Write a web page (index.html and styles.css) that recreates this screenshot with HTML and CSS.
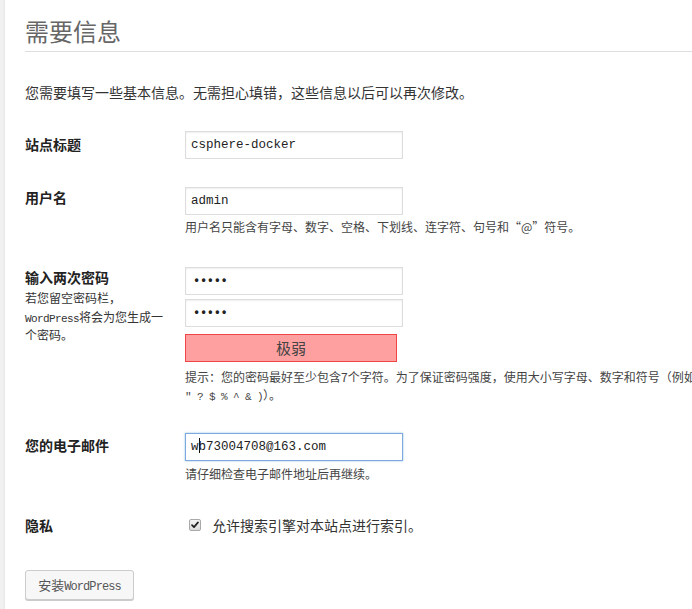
FILE: index.html
```html
<!DOCTYPE html>
<html lang="zh-CN">
<head>
<meta charset="utf-8">
<title>WordPress › 安装</title>
<link rel="stylesheet" href="styles.css">
</head>
<body>
<div class="wrap">
  <h1 class="title">需要信息</h1>
  <p class="intro">您需要填写一些基本信息。无需担心填错，这些信息以后可以再次修改。</p>

  <div class="form">
    <div class="row row-site">
      <div class="label lbl-site">站点标题</div>
      <div class="field"><div class="input">csphere-docker</div></div>
    </div>

    <div class="row row-user">
      <div class="label">用户名</div>
      <div class="field">
        <div class="input">admin</div>
        <p class="desc desc-user">用户名只能含有字母、数字、空格、下划线、连字符、句号和“@”符号。</p>
      </div>
    </div>

    <div class="row row-pass">
      <div class="label">
        <div class="lbl-main">输入两次密码</div>
        <div class="lbl-sub">若您留空密码栏，<br><span class="latin">WordPress</span>将会为您生成一<br>个密码。</div>
      </div>
      <div class="field">
        <div class="input dots">•••••</div>
        <div class="input dots second">•••••</div>
        <div class="meter">极弱</div>
        <p class="desc desc-hint">提示：您的密码最好至少包含7个字符。为了保证密码强度，使用大小写字母、数字和符号（例如! <br><span class="latin">" ? $ % ^ &amp; )</span>）。</p>
      </div>
    </div>

    <div class="row row-mail">
      <div class="label lbl-mail">您的电子邮件</div>
      <div class="field">
        <div class="input focus">w<span class="caret"></span>b73004708@163.com</div>
        <p class="desc desc-mail">请仔细检查电子邮件地址后再继续。</p>
      </div>
    </div>

    <div class="row row-privacy">
      <div class="label lbl-privacy">隐私</div>
      <div class="field check-field">
        <span class="checkbox"><svg viewBox="0 0 11 11" width="11" height="11"><path d="M2.2 5.6 L4.4 7.8 L8.8 2.6" fill="none" stroke="#222" stroke-width="1.9" stroke-linecap="round" stroke-linejoin="round"/></svg></span>
        <span class="check-text">允许搜索引擎对本站点进行索引。</span>
      </div>
    </div>
  </div>

  <div class="submit"><span class="button">安装<span class="latin btn-latin">WordPress</span></span></div>
</div>
</body>
</html>
```

FILE: styles.css
```css
html, body {
  margin: 0;
  padding: 0;
  overflow: hidden;
}

body {
  background: #f1f1f1;
  font-family: "Noto Sans CJK SC", "Noto Sans", sans-serif;
  color: #333;
  font-size: 14px;
  height: 609px;
}

.wrap {
  margin-left: 5px;
  background: #fff;
  padding: 16px 0 0 20px;
  height: 609px;
  box-sizing: border-box;
  box-shadow: -1px 0 2px rgba(0, 0, 0, 0.05);
}

.title {
  margin: 0;
  font-size: 24px;
  line-height: 30px;
  font-weight: 400;
  color: #666;
  padding-bottom: 5px;
  border-bottom: 1px solid #dedede;
}

.intro {
  margin: 30px 0 0;
  font-size: 14px;
  line-height: 20px;
  color: #333;
}

.row {
  display: grid;
  grid-template-columns: 160px 1fr;
}

.row-site { margin-top: 29px; }
.row-user { margin-top: 28px; }
.row-pass { margin-top: 31px; }
.row-mail { margin-top: 29px; }
.row-privacy { margin-top: 32px; }

.label {
  font-weight: 700;
  font-size: 14px;
  line-height: 20px;
  color: #222;
}

.lbl-site { padding-top: 3px; }
.lbl-mail { padding-top: 2px; }

.lbl-sub {
  margin-top: 2px;
  font-weight: 400;
  font-size: 12px;
  line-height: 18.5px;
  color: #333;
}

.latin {
  font-family: "Liberation Mono", "DejaVu Sans Mono", monospace;
  font-size: 11px;
  line-height: 1;
  letter-spacing: -0.6px;
}

.btn-latin {
  font-size: 12px;
  letter-spacing: -0.9px;
}

.field {
  min-width: 0;
}

.input {
  box-sizing: border-box;
  width: 218px;
  height: 28px;
  border: 1px solid #ddd;
  box-shadow: inset 0 1px 2px rgba(0, 0, 0, 0.07);
  padding: 0 5px;
  font-family: "Liberation Mono", "DejaVu Sans Mono", monospace;
  font-size: 12.5px;
  line-height: 26px;
  color: #222;
  background: #fff;
  white-space: nowrap;
}

.input.dots {
  font-weight: 700;
  font-size: 12px;
  letter-spacing: -0.3px;
  padding-left: 7px;
}

.input.second { margin-top: 4px; }

.input.focus {
  border-color: #7fa8e0;
  box-shadow: 0 0 2px rgba(30, 140, 190, 0.5);
}

.caret {
  display: inline-block;
  width: 1px;
  height: 15px;
  background: #111;
  vertical-align: -3px;
  margin: 0 -1px 0 0;
}

.meter {
  box-sizing: border-box;
  width: 212px;
  height: 28px;
  margin-top: 7px;
  background: #ffa0a0;
  border: 1px solid #f04545;
  text-align: center;
  font-size: 15px;
  line-height: 26px;
  color: #444;
}

.desc {
  margin: 0;
  font-size: 12px;
  line-height: 18px;
  color: #444;
}

.desc-user { margin-top: 3px; }
.desc-hint { margin-top: 6px; white-space: nowrap; }
.desc-mail { margin-top: 4px; }

.check-field {
  display: flex;
  align-items: center;
  height: 20px;
}

.checkbox {
  box-sizing: border-box;
  width: 12px;
  height: 12px;
  margin-left: 4px;
  border: 1px solid #a8a8a8;
  border-radius: 2px;
  background: linear-gradient(#f4f4f4, #dcdcdc);
  display: flex;
  align-items: center;
  justify-content: center;
}

.checkbox svg {
  display: block;
  width: 10px;
  height: 10px;
}

.check-text {
  margin-left: 11px;
  font-size: 14px;
  line-height: 20px;
  color: #333;
}

.submit {
  margin-top: 35px;
  height: 31px;
}

.button {
  display: inline-block;
  box-sizing: border-box;
  height: 30px;
  width: 109px;
  text-align: center;
  border: 1px solid #ccc;
  border-radius: 3px;
  background: #f7f7f7;
  box-shadow: 0 1px 0 #ccc;
  font-size: 13px;
  line-height: 28px;
  color: #555;
  vertical-align: top;
}
```
